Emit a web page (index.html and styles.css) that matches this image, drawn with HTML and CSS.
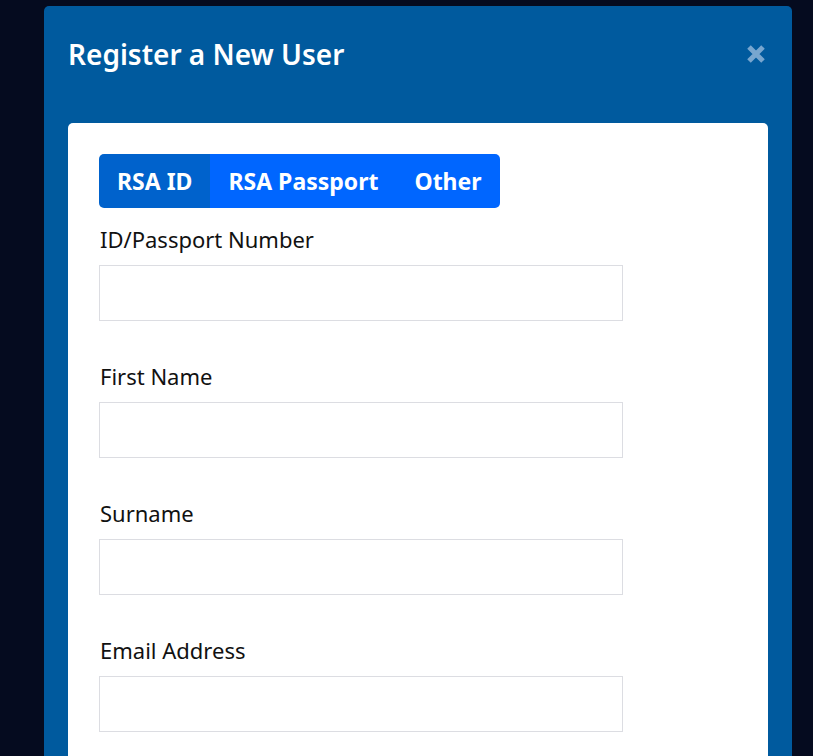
FILE: index.html
```html
<!DOCTYPE html>
<html lang="en">
<head>
<meta charset="utf-8">
<title>Register a New User</title>
<link rel="stylesheet" href="styles.css">
</head>
<body>
<div class="modal">
  <div class="modal-header">
    <h1 class="modal-title">Register a New User</h1>
    <button class="close" aria-label="Close">
      <svg width="20" height="20" viewBox="0 0 20 20"><path d="M3 3 L17 17 M17 3 L3 17" stroke="#78a6cf" stroke-width="5" stroke-linecap="butt"/></svg>
    </button>
  </div>
  <div class="card">
    <div class="btn-group">
      <button class="btn active">RSA ID</button>
      <button class="btn">RSA Passport</button>
      <button class="btn">Other</button>
    </div>
    <div class="field">
      <label class="label">ID/Passport Number</label>
      <input class="input" type="text">
    </div>
    <div class="field">
      <label class="label">First Name</label>
      <input class="input" type="text">
    </div>
    <div class="field">
      <label class="label">Surname</label>
      <input class="input" type="text">
    </div>
    <div class="field">
      <label class="label">Email Address</label>
      <input class="input" type="text">
    </div>
  </div>
</div>
</body>
</html>
```
FILE: styles.css
```css
html, body {
  margin: 0;
  padding: 0;
  height: 100%;
  overflow: hidden;
}
body {
  background: #050b1f;
  font-family: "Noto Sans", "Open Sans", sans-serif;
  color: #111;
}
.modal {
  margin: 6px 0 0 44px;
  width: 748px;
  height: 750px;
  background: #005a9e;
  border-radius: 5px 5px 0 0;
  padding: 0 24px;
  box-sizing: border-box;
  overflow: hidden;
}
.modal-header {
  height: 117px;
  display: flex;
  align-items: flex-start;
  justify-content: space-between;
}
.modal-title {
  margin: 29px 0 0 0;
  font-size: 28px;
  font-weight: 600;
  color: #fff;
  line-height: 38px;
}
.close {
  margin: 38px 2px 0 0;
  background: none;
  border: 0;
  padding: 0;
  width: 20px;
  height: 20px;
  cursor: pointer;
}
.close svg { display: block; }
.card {
  background: #fff;
  border-radius: 5px 5px 0 0;
  padding: 31px 31px 0;
  height: 633px;
  overflow: hidden;
}
.btn-group {
  display: inline-flex;
  border-radius: 5px;
  overflow: hidden;
  margin-bottom: 16px;
}
.btn {
  height: 54px;
  border: 0;
  background: #0066ff;
  color: #fff;
  font-family: inherit;
  font-size: 23px;
  font-weight: 700;
  padding: 0 18px;
}
.btn.active { background: #0062cc; }
.field {
  display: flex;
  flex-direction: column;
  align-items: flex-start;
  margin-bottom: 40px;
}
.label {
  font-size: 22px;
  line-height: 30px;
  margin: 0 0 11px 1px;
  color: #111;
}
.input {
  width: 524px;
  height: 56px;
  box-sizing: border-box;
  border: 1px solid #dcdde2;
  border-radius: 0;
  padding: 0 12px;
  font-size: 18px;
  font-family: inherit;
}
```
